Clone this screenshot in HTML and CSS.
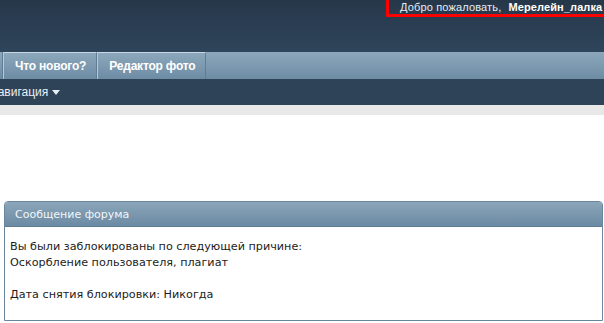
FILE: index.html
```html
<!DOCTYPE html>
<html lang="ru">
<head>
<meta charset="utf-8">
<title>Сообщение форума</title>
<link rel="stylesheet" href="styles.css">
</head>
<body>
<div class="page">
  <header class="top">
    <div class="welcome">Добро пожаловать, <b class="user">Мерелейн_лалка</b></div>
  </header>
  <nav class="tabs">
    <span class="tab tab-prev"></span>
    <a class="tab">Что нового?</a>
    <a class="tab">Редактор фото</a>
  </nav>
  <div class="subnav">
    <span class="navlink">Навигация <span class="caret"></span></span>
  </div>
  <div class="strip"></div>
  <main class="content">
    <section class="panel">
      <h2 class="panel-head">Сообщение форума</h2>
      <div class="panel-body">
        Вы были заблокированы по следующей причине:<br>
        Оскорбление пользователя, плагиат<br><br>
        Дата снятия блокировки: Никогда
      </div>
    </section>
  </main>
</div>
</body>
</html>
```

FILE: styles.css
```css
html, body {
  margin: 0;
  padding: 0;
  background: #fff;
  overflow: hidden;
}
.page {
  width: 604px;
  font-family: "Liberation Sans", Arial, sans-serif;
}
.top {
  height: 52px;
  background: linear-gradient(#27374a, #2f455b);
  display: flex;
  justify-content: flex-end;
  align-items: flex-start;
  overflow: hidden;
}
.welcome {
  flex: none;
  width: 216px;
  margin-right: -15px;
  height: 14px;
  border: 3px solid #ff0000;
  border-top: 0;
  padding-left: 11px;
  color: #e6edf3;
  font-size: 11px;
  letter-spacing: 0.15px;
  line-height: 14px;
  white-space: nowrap;
  overflow: hidden;
}
.user {
  margin-left: 4px;
  color: #fff;
  letter-spacing: 0.1px;
}
.tabs {
  height: 27px;
  display: flex;
  background: linear-gradient(#8da8bc, #6d8ca4);
}
.tab {
  display: flex;
  align-items: center;
  padding: 0 10px 0 11px;
  border-left: 1px solid #b5c8d6;
  border-right: 1px solid #5f7e96;
  border-top: 1px solid #c9d7e2;
  color: #fff;
  font-weight: bold;
  font-size: 12px;
  letter-spacing: -0.2px;
}
.tab-prev {
  width: 2px;
  padding: 0;
  border-left: 0;
  border-top: 0;
}
.subnav {
  height: 26px;
  background: #2e4358;
  display: flex;
  align-items: center;
}
.navlink {
  margin-left: -11px;
  color: #e8eff5;
  font-size: 12px;
  display: flex;
  align-items: center;
}
.caret {
  display: inline-block;
  margin-left: 4px;
  width: 0;
  height: 0;
  border-left: 4px solid transparent;
  border-right: 4px solid transparent;
  border-top: 5px solid #e8eff5;
}
.strip {
  height: 10px;
  background: #e8e8e8;
}
.content {
  padding: 86px 1px 0 4px;
}
.panel {
  height: 118px;
  border: 1px solid #68879f;
  border-radius: 4px 4px 0 0;
  background: #fff;
}
.panel-head {
  margin: 0;
  padding-left: 10px;
  background: linear-gradient(#8ba6ba, #6b8aa3);
  border-radius: 3px 3px 0 0;
  border-bottom: 1px solid #5f7e96;
  color: #f2f6f9;
  font-family: "DejaVu Sans", Verdana, sans-serif;
  font-weight: normal;
  font-size: 11px;
  line-height: 26px;
  height: 24px;
}
.panel-body {
  padding: 12px 5px 10px;
  color: #1c1c1c;
  font-family: "DejaVu Sans", Verdana, sans-serif;
  font-size: 11.2px;
  line-height: 16px;
}
```
